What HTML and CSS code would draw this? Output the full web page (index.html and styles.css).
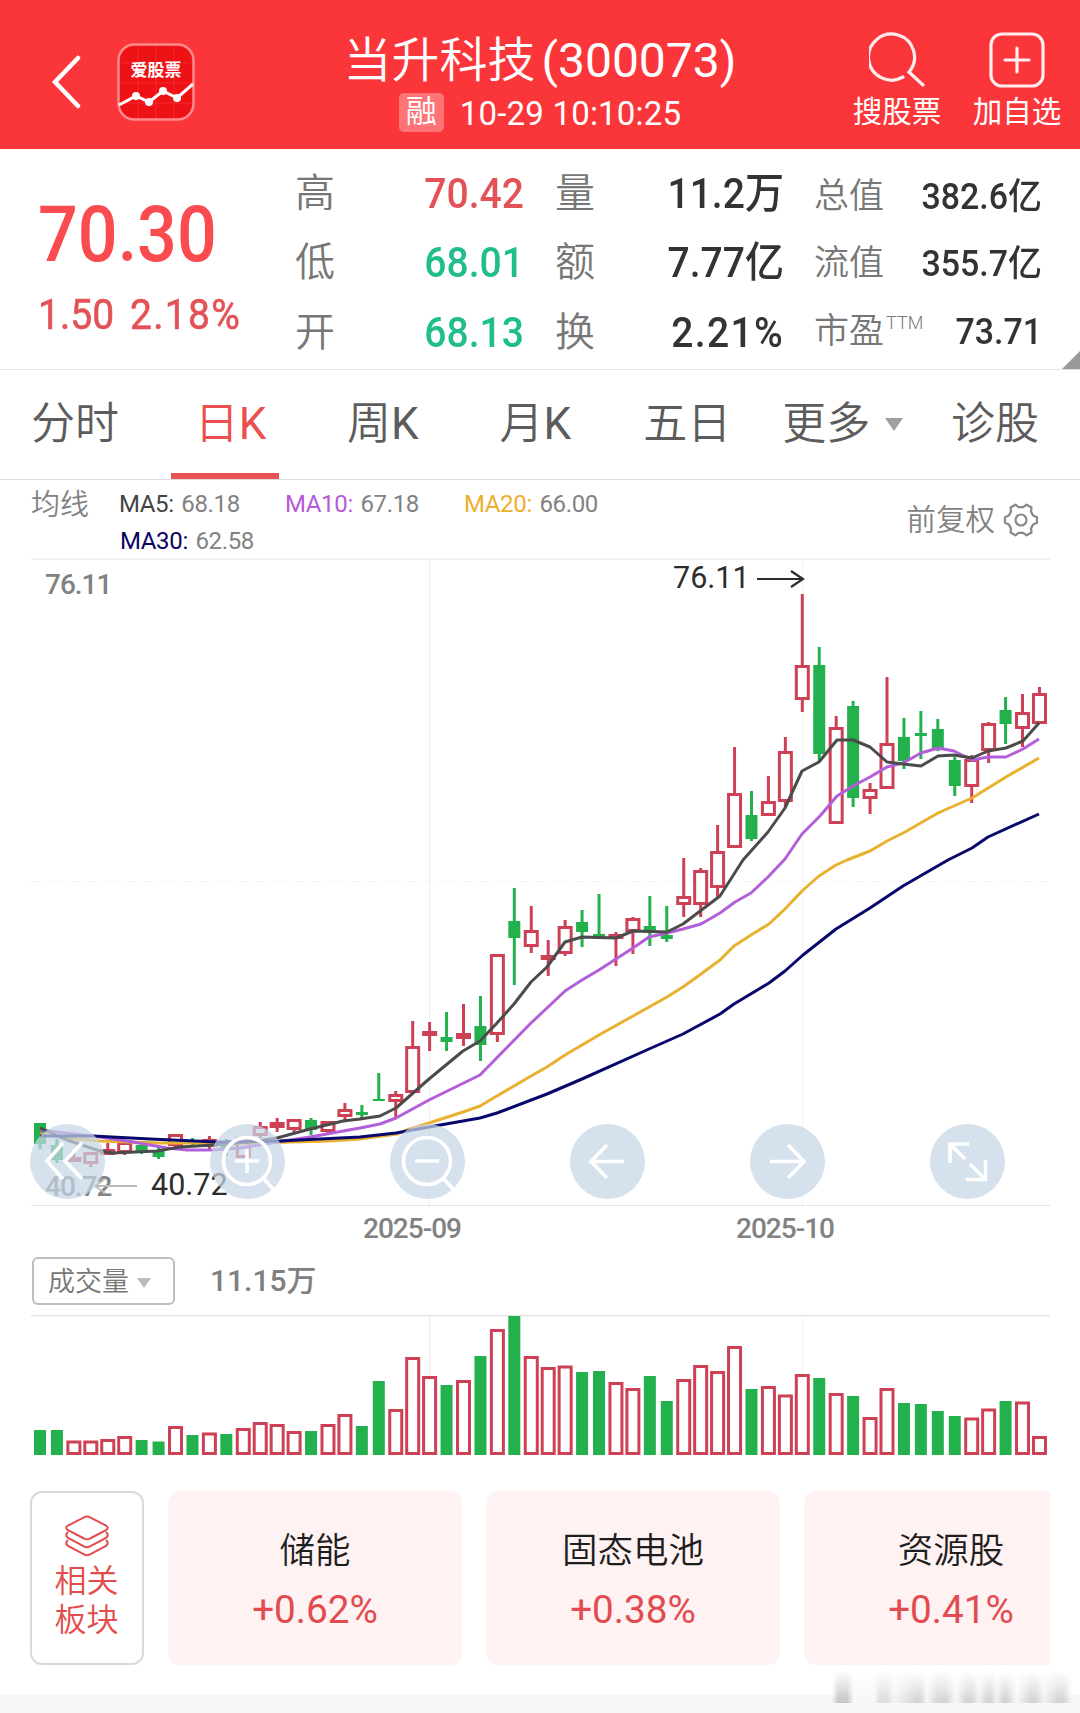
FILE: index.html
```html
<!DOCTYPE html>
<html lang="zh-CN">
<head>
    <meta charset="UTF-8">
    <meta name="viewport" content="width=device-width, initial-scale=1.0">
    <title>当升科技(300073)</title>
    <link rel="stylesheet" href="styles.css">
</head>
<body>

    <header class="header">
        <svg class="back" viewBox="0 0 30 54"><path d="M27 3 L4 27 L27 51"/></svg>
        <svg class="logo" viewBox="0 0 78 78">
            <rect x="1.5" y="1.5" width="75" height="75" rx="16" fill="#ee1217" stroke="#ff8a8c" stroke-width="2.5"/>
            <path d="M21 3V75M39 3V75M57 3V75M3 20H75M3 40H75M3 60H75" stroke="#f4282b" stroke-width="1" fill="none"/>
            <text x="39" y="33" text-anchor="middle">爱股票</text>
            <path d="M2 62 L19 53 L32 59 L46 48 L60 55 L76 41" stroke="#fff" stroke-width="3" fill="none"/>
            <g fill="#fff"><circle cx="19" cy="53" r="4"/><circle cx="32" cy="59" r="4"/><circle cx="46" cy="48" r="4"/><circle cx="60" cy="55" r="4"/></g>
        </svg>
        <div class="title">
            <h1>当升科技<span>(300073)</span></h1>
            <p><span class="badge">融</span><span class="time">10-29 10:10:25</span></p>
        </div>
        <div class="action">
            <svg viewBox="0 0 56 56"><path d="M34 45 A23 23 0 1 1 40 40 L54 53"/></svg>
            <span>搜股票</span>
        </div>
        <div class="action">
            <svg viewBox="0 0 56 56"><rect x="2" y="2" width="52" height="52" rx="11"/><path d="M28 16V40M16 28H40"/></svg>
            <span>加自选</span>
        </div>
    </header>

    <section class="quote">
        <div class="price">
            <div class="now">70.30</div>
            <div class="change"><span>1.50</span><span class="percent">2.18%</span></div>
        </div>
        <dl class="stats col1">
            <dt>高</dt><dd class="up">70.42</dd>
            <dt>低</dt><dd class="down">68.01</dd>
            <dt>开</dt><dd class="down">68.13</dd>
        </dl>
        <dl class="stats col2">
            <dt>量</dt><dd>11.2万</dd>
            <dt>额</dt><dd>7.77亿</dd>
            <dt>换</dt><dd class="percent">2.21%</dd>
        </dl>
        <dl class="stats col3">
            <dt>总值</dt><dd>382.6亿</dd>
            <dt>流值</dt><dd>355.7亿</dd>
            <dt>市盈<sup>TTM</sup></dt><dd>73.71</dd>
        </dl>
        <i class="corner"></i>
    </section>

    <nav class="tabs">
        <a class="t1">分时</a>
        <a class="t2 active">日<span>K</span></a>
        <a class="t3">周<span>K</span></a>
        <a class="t4">月<span>K</span></a>
        <a class="t5">五日</a>
        <a class="t6">更多<i class="caret"></i></a>
        <a class="t7">诊股</a>
    </nav>

    <section class="legend">
        <span class="legend-name">均线</span>
        <div class="averages">
            <span class="w1"><b class="ma5">MA5:</b> 68.18</span>
            <span class="w2"><b class="ma10">MA10:</b> 67.18</span>
            <span class="w3"><b class="ma20">MA20:</b> 66.00</span>
            <span class="w4"><b class="ma30">MA30:</b> 62.58</span>
        </div>
        <div class="adjust">
            <span>前复权</span>
            <svg viewBox="0 0 34 34">
                <path d="M33 14.2L33 19.8L29.2 21.4L27 25.4L27.5 29.5L22.6 32.3L19.3 29.8L14.7 29.8L11.4 32.3L6.5 29.5L7 25.4L4.8 21.4L1 19.8L1 14.2L4.8 12.6L7 8.6L6.5 4.5L11.4 1.7L14.7 4.2L19.3 4.2L22.6 1.7L27.5 4.5L27 8.6L29.2 12.6Z"/>
                <circle cx="17" cy="17" r="5.5"/>
            </svg>
        </div>
    </section>

    <section class="chart">
        <svg id="kline" width="1080" height="690" viewBox="0 558 1080 690"></svg>
        <div class="controls">
            <svg viewBox="0 0 75 75"><path d="M33 19L17 37L33 55M52 19L35 37L52 55"/></svg>
            <svg viewBox="0 0 75 75"><circle cx="37" cy="37" r="23.5"/><path d="M25 37H49M37 25V49M53 54L63 65"/></svg>
            <svg viewBox="0 0 75 75"><circle cx="37" cy="37" r="23.5"/><path d="M25 37H49M53 54L63 65"/></svg>
            <svg viewBox="0 0 75 75"><path d="M54 37.5H21M37 21L21 37.5L37 54"/></svg>
            <svg viewBox="0 0 75 75"><path d="M20 37.5H54M38 21L54 37.5L38 54"/></svg>
            <svg viewBox="0 0 75 75"><path d="M39 20H20V39M20 20L35 35M40 40L55 55M36 55.5H55.5V36"/></svg>
        </div>
    </section>

    <section class="volume">
        <div class="volume-bar">
            <button class="select">成交量<i class="caret"></i></button>
            <span class="volume-now">11.15万</span>
        </div>
        <svg id="volume" width="1080" height="142" viewBox="0 1315 1080 142"></svg>
    </section>

    <section class="related">
        <div class="related-title">
            <svg viewBox="0 0 44 42">
                <path d="M19 2.3 Q22 .7 25 2.3 L41 10.5 Q44.5 12.8 41 15.2 L25 23.5 Q22 25.2 19 23.5 L3 15.2 Q-.5 12.8 3 10.5 Z"/>
                <path d="M3 17 Q-.5 20 3 23 L19 31.3 Q22 33 25 31.3 L41 23 Q44.5 20 41 17"/>
                <path d="M3 25 Q-.5 28 3 31 L19 39.3 Q22 41 25 39.3 L41 31 Q44.5 28 41 25"/>
            </svg>
            <span>相关<br>板块</span>
        </div>
        <div class="card"><h2>储能</h2><p>+0.62%</p></div>
        <div class="card"><h2>固态电池</h2><p>+0.38%</p></div>
        <div class="card"><h2>资源股</h2><p>+0.41%</p></div>
    </section>

    <footer class="footer"><div class="shade"></div></footer>

    <script src="script.js"></script>
</body>
</html>
```

FILE: styles.css
```css
* {
    margin: 0;
    padding: 0;
    box-sizing: border-box;
}
body {
    width: 1080px;
    height: 1713px;
    overflow: hidden;
    background-color: #fff;
    font-family: Roboto, "Noto Sans CJK SC", sans-serif;
    color: #333;
}
svg {
    display: block;
    flex-shrink: 0;
}
i {
    display: inline-block;
}

/* 顶部 */
.header {
    height: 149px;
    background-color: #fb363b;
    color: #fff;
    display: flex;
    padding-left: 51px;
}
.back {
    width: 30px;
    height: 54px;
    margin-top: 55px;
    fill: none;
    stroke: #fff;
    stroke-width: 4.5;
    stroke-linecap: round;
}
.logo {
    width: 78px;
    height: 78px;
    margin: 43px 0 0 36px;
}
.logo text {
    font-size: 17px;
    font-weight: 700;
    fill: #fff;
}
.title {
    width: 500px;
    margin-left: 95px;
    text-align: center;
    padding-top: 32px;
}
.title h1 {
    font-size: 48px;
    font-weight: 350;
    line-height: 58px;
    white-space: nowrap;
}
.title h1 span {
    font-weight: 400;
    margin-left: 6px;
}
.title p {
    display: flex;
    align-items: center;
    justify-content: center;
    height: 39px;
    margin-top: 3px;
}
.badge {
    width: 45px;
    height: 39px;
    line-height: 38px;
    font-size: 31px;
    border-radius: 5px;
    background-color: #fd7376;
    margin-right: 16px;
}
.time {
    font-size: 33px;
    line-height: 41px;
    padding-top: 2px;
    letter-spacing: 0.2px;
}
.action {
    width: 120px;
    flex-shrink: 0;
    padding-top: 32px;
    display: flex;
    flex-direction: column;
    align-items: center;
    font-size: 29.5px;
    line-height: 40px;
}
.title + .action {
    margin-left: 47px;
}
.action svg {
    width: 56px;
    height: 56px;
    margin-bottom: 4px;
    fill: none;
    stroke: #ffecec;
    stroke-width: 3.2;
    stroke-linecap: round;
}

/* 行情 */
.quote {
    position: relative;
    height: 221px;
    border-bottom: 1px solid #e2e2e2;
    display: flex;
}
.price {
    width: 296px;
    padding-left: 38px;
    color: #fa4b50;
    font-weight: 500;
}
.now {
    font-size: 77px;
    line-height: 90px;
    margin-top: 41px;
    transform: scaleX(0.91);
    transform-origin: left;
}
.change {
    display: flex;
    gap: 17px;
    font-size: 42px;
    font-weight: 400;
    line-height: 50px;
    margin-top: 10px;
    color: #e35256;
    transform: scaleX(0.93);
    transform-origin: left;
    -webkit-text-stroke: 0.6px;
}
.percent {
    letter-spacing: 1.4px;
}
.stats {
    display: grid;
    grid-template-columns: auto 1fr;
    grid-auto-rows: 69.5px;
    align-items: center;
    padding-top: 10px;
    height: 218px;
    line-height: 50px;
}
.stats dt {
    font-size: 40px;
    font-weight: 350;
    color: #777;
    white-space: nowrap;
}
.stats dd {
    font-size: 42px;
    font-weight: 500;
    text-align: right;
    white-space: nowrap;
    transform: scaleX(0.93);
    transform-origin: right;
}
.stats .up {
    color: #e35256;
}
.stats .down {
    color: #20bd8d;
}
.col1 {
    width: 229px;
    margin-left: -1px;
}
.col2 {
    width: 229px;
    margin-left: 31px;
}
.col3 {
    grid-template-columns: 90px 138px;
    margin-left: 30px;
    grid-auto-rows: 67.5px;
    padding-top: 14px;
}
.col3 dt {
    font-size: 35px;
}
.col3 dd {
    font-size: 36.5px;
}
.col3 sup {
    font-size: 18px;
    line-height: 0;
    vertical-align: 14px;
    margin-left: 2px;
}
.corner {
    position: absolute;
    right: 0;
    bottom: 0;
    border-left: 18px solid transparent;
    border-bottom: 18px solid #999;
}

/* 周期 */
.tabs {
    height: 110px;
    border-bottom: 1px solid #dadcde;
    display: flex;
    padding: 0 41px 0 31px;
    font-size: 44px;
    line-height: 109px;
    font-weight: 350;
    color: #5c5c5c;
}
.tabs a {
    white-space: nowrap;
}
.tabs span {
    font-weight: 400;
}
.tabs .active {
    color: #ea5050;
    width: 108px;
    padding-left: 11px;
    text-align: center;
    border-bottom: 6px solid #e85252;
}
.t2 {
    margin-left: 52px;
}
.t3 {
    margin-left: 68px;
}
.t4 {
    margin-left: 81px;
}
.t5 {
    margin-left: 72px;
}
.t6 {
    margin-left: 51px;
}
.t7 {
    margin-left: auto;
}
.caret {
    border: 9px solid transparent;
    border-top: 13px solid #a0a0a0;
    border-bottom: 0;
    margin-left: 15px;
    vertical-align: 8px;
}

/* 均线 */
.legend {
    height: 78px;
    display: flex;
    padding: 0 42px 0 31px;
    color: #828282;
}
.legend-name {
    font-size: 29px;
    font-weight: 350;
    line-height: 50px;
    width: 88px;
}
.averages {
    width: 560px;
    display: flex;
    flex-wrap: wrap;
    font-size: 24px;
    line-height: 37px;
    padding-top: 6px;
}
.averages span {
    white-space: pre;
    letter-spacing: -0.35px;
}
.averages b {
    font-weight: 400;
    margin-right: 2px;
}
.w1 {
    width: 166px;
}
.w2 {
    width: 179px;
}
.w3 {
    width: 190px;
}
.w4 {
    padding-left: 1px;
}
.ma5 {
    color: #444;
}
.ma10 {
    color: #b55bd8;
}
.ma20 {
    color: #edb02e;
}
.ma30 {
    color: #0b0464;
}
.adjust {
    margin-left: auto;
    height: 79px;
    display: flex;
    align-items: center;
    gap: 9px;
    font-size: 29.5px;
    line-height: 40px;
    font-weight: 350;
}
.adjust svg {
    width: 34px;
    height: 34px;
    overflow: visible;
    fill: none;
    stroke: #888;
    stroke-width: 2.2;
    stroke-linejoin: round;
}

/* K线 */
.chart {
    position: relative;
}
.controls {
    position: absolute;
    left: 30px;
    top: 566px;
    display: flex;
    gap: 105px;
}
.controls svg {
    width: 75px;
    height: 75px;
    border-radius: 50%;
    background-color: rgba(197, 213, 229, 0.72);
    fill: none;
    stroke: #fff;
    stroke-width: 3.6;
}
.axis {
    font-size: 28px;
    font-weight: 500;
    letter-spacing: -1px;
    fill: #828282;
}
.callout {
    font-size: 30.5px;
    fill: #2d2d2d;
}

/* 成交量 */
.volume-bar {
    height: 67px;
    padding: 9px 0 0 32px;
    display: flex;
    align-items: flex-start;
}
.select {
    width: 143px;
    height: 48px;
    border: 2px solid #bfbfbf;
    border-radius: 6px;
    background: none;
    padding: 2px 0 0 14px;
    text-align: left;
    font: 350 27px/42px Roboto, "Noto Sans CJK SC", sans-serif;
    color: #777;
    white-space: nowrap;
}
.select .caret {
    border-width: 10px 7.5px 0;
    border-top-color: #bbb;
    margin-left: 8px;
    vertical-align: 3px;
}
.volume-now {
    font-size: 30px;
    font-weight: 500;
    line-height: 47px;
    margin-left: 35px;
    color: #808080;
}

/* 相关板块 */
.related {
    display: flex;
    gap: 24px;
    height: 174px;
    margin: 34px 30px 30px;
    overflow: hidden;
}
.related-title {
    width: 114px;
    flex-shrink: 0;
    border: 2px solid #dadada;
    border-radius: 12px;
    padding: 22px 1px 0 0;
    text-align: center;
    font-size: 32px;
    font-weight: 350;
    line-height: 39px;
    color: #e24c4c;
}
.related-title svg {
    width: 44px;
    height: 42px;
    margin: 0 auto 5px;
    fill: none;
    stroke: #e04c4c;
    stroke-width: 2;
}
.card {
    width: 294px;
    flex-shrink: 0;
    border-radius: 12px;
    background-color: #fef2f2;
    text-align: center;
    padding-top: 35px;
}
.card h2 {
    font-size: 35.5px;
    font-weight: 350;
    line-height: 50px;
    color: #1e1e1e;
}
.card p {
    font-size: 38.7px;
    line-height: 50px;
    margin-top: 9px;
    color: #e24c50;
}
.footer {
    position: relative;
    height: 18px;
    background-color: #f7f7f7;
}
.shade {
    position: absolute;
    left: 832px;
    top: -24px;
    width: 240px;
    height: 32px;
    background: linear-gradient(90deg, transparent 0, #c4c4c4 6px 15px, #f8f8f8 22px 42px, #dcdcdc 48px 55px, #f5f5f5 62px, #d2d2d2 84px 88px, #f5f5f5 95px, #d2d2d2 106px 114px, #f8f8f8 124px, #d2d2d2 134px 140px, #f2f2f2 147px, #d2d2d2 155px 159px, #f2f2f2 165px, #d2d2d2 171px 175px, #f8f8f8 185px, #d2d2d2 198px 203px, #f2f2f2 212px, #d2d2d2 226px 232px, transparent);
    -webkit-mask-image: linear-gradient(transparent, #000);
    mask-image: linear-gradient(transparent, #000);
}
```

FILE: script.js
```js
var RED = '#cd4055';
var GREEN = '#23b14d';
var STEP = 16.94;

// 颜色, 最高, 实体上沿, 实体下沿, 最低, 成交量
var days = [
    ['g', 1123, 1123, 1144, 1149, 25], ['g', 1139, 1145, 1160, 1163, 25], ['r', 1153, 1157, 1162, 1162, 14.5],
    ['r', 1152, 1152, 1164, 1167, 14.5], ['r', 1143, 1149, 1155, 1155, 16], ['r', 1142, 1142, 1153, 1155, 19],
    ['g', 1145, 1145, 1152, 1154, 15], ['g', 1147, 1150, 1157, 1159, 13.5], ['r', 1134, 1134, 1146, 1147, 29],
    ['g', 1138, 1140, 1144, 1147, 20], ['r', 1136, 1139, 1147, 1149, 22.5], ['g', 1139, 1143, 1150, 1156, 21],
    ['r', 1137, 1137, 1158, 1158, 27], ['r', 1122, 1126, 1136, 1138, 33], ['r', 1118, 1122, 1128, 1132, 31],
    ['r', 1119, 1119, 1130, 1132, 24], ['g', 1118, 1120, 1130, 1135, 24], ['r', 1121, 1121, 1132, 1133, 31],
    ['r', 1103, 1109, 1117, 1120, 41], ['g', 1105, 1112, 1115, 1119, 29], ['g', 1073, 1099, 1101, 1101, 74],
    ['r', 1091, 1094, 1102, 1117, 46], ['r', 1021, 1046, 1093, 1093, 98], ['r', 1022, 1031, 1036, 1051, 79],
    ['g', 1012, 1037, 1042, 1051, 70], ['r', 1004, 1033, 1039, 1046, 75], ['g', 996, 1026, 1045, 1061, 99],
    ['r', 954, 954, 1035, 1042, 126], ['g', 888, 921, 938, 985, 139], ['r', 906, 930, 947, 953, 99],
    ['r', 940, 955, 960, 976, 88], ['r', 920, 926, 954, 956, 89.5], ['g', 910, 922, 932, 947, 83],
    ['g', 894, 934, 939, 939, 84], ['r', 932, 934, 939, 966, 73], ['r', 917, 918, 932, 954, 67],
    ['g', 896, 926, 931, 946, 79], ['g', 906, 935, 939, 942, 54], ['r', 858, 896, 905, 917, 76],
    ['r', 868, 870, 905, 917, 90], ['r', 825, 851, 888, 897, 84], ['r', 747, 793, 848, 848, 109],
    ['g', 791, 815, 839, 841, 66], ['r', 776, 801, 816, 816, 69], ['r', 737, 751, 802, 807, 60.5],
    ['r', 594, 665, 700, 712, 81], ['g', 647, 665, 754, 762, 77], ['r', 716, 727, 824, 824, 62],
    ['g', 701, 706, 798, 807, 59], ['r', 783, 789, 799, 814, 38], ['r', 677, 743, 789, 789, 67],
    ['g', 718, 737, 761, 769, 52], ['g', 711, 733, 736, 759, 51], ['g', 719, 729, 749, 751, 44],
    ['g', 757, 760, 786, 796, 39], ['r', 755, 759, 787, 803, 37.5], ['r', 722, 723, 751, 763, 46.5],
    ['g', 697, 710, 724, 744, 54], ['r', 694, 712, 729, 747, 53.5], ['r', 687, 693, 724, 724, 19]
];

var averages = {
    '#e8b12f': '40,1134 67,1138 100,1141 160,1143 250,1143 330,1141 360,1139 397,1134 407,1130 429,1123 463,1112 480,1106 514,1086 531,1076 547,1067 565,1055 599,1035 633,1016 667,997 683,987 701,974 720,960 734,946 751,935 769,924 785,909 802,891 819,876 836,865 847,860 870,851 887,841 905,832 938,813 972,798 1006,777 1039,758',
    '#b35fd9': '40,1130 100,1137 133,1142 167,1148 187,1150 213,1150 240,1148 277,1142 310,1137 360,1128 380,1124 396,1118 429,1100 480,1075 531,1023 547,1008 565,991 582,980 599,970 633,948 649,937 667,933 683,929 701,924 720,913 735,902 751,893 768,877 785,859 802,834 820,816 837,796 853,786 870,777 887,767 903,763 921,753 938,748 954,751 972,760 988,757 1006,757 1023,749 1039,739',
    '#4b4b4b': '40,1128 67,1140 100,1151 113,1153 157,1151 180,1147 213,1145 250,1142 277,1138 310,1129 343,1121 360,1119 380,1116 396,1108 429,1079 463,1051 480,1041 497,1023 514,1004 531,982 547,967 565,942 582,937 616,938 633,931 667,932 683,924 720,896 743,860 768,832 785,808 802,771 819,762 837,740 853,740 870,747 887,762 903,764 921,766 938,756 954,755 972,758 988,751 1006,748 1023,741 1039,723',
    '#08086c': '40,1136 93,1136 150,1139 217,1142 280,1141 360,1137 396,1133 429,1127 463,1121 480,1118 497,1113 547,1094 582,1079 649,1049 683,1034 720,1014 734,1004 769,983 785,971 803,955 836,929 870,908 903,886 922,875 948,860 972,848 988,837 1039,814'
};

function line(x1, y1, x2, y2, color, width) {
    return '<path d="M' + x1 + ' ' + y1 + 'L' + x2 + ' ' + y2 + '" stroke="' + color + '" stroke-width="' + width + '" fill="none"/>';
}

// 阳线空心，阴线实心
function box(type, x, top, bottom) {
    if (type === 'g') {
        return '<rect x="' + (x - 6) + '" y="' + top + '" width="12" height="' + (bottom - top) + '" fill="' + GREEN + '"/>';
    }
    return '<rect x="' + (x - 6) + '" y="' + (top + 1.5) + '" width="12" height="' + Math.max(bottom - top - 3, 1) + '" fill="#fff" stroke="' + RED + '" stroke-width="3"/>';
}

var k = '';
k += line(31, 559, 1050, 559, '#f0f2f4', 2);
k += line(31, 1205.5, 1050, 1205.5, '#e2e3e5', 1);
k += line(429.5, 560, 429.5, 1205, '#f1f1f3', 1.5) + line(802.5, 560, 802.5, 1205, '#f5f5f7', 1.5);
k += '<path d="M31 881.5H1050" stroke="#f3f3f5" stroke-dasharray="8 6"/>';

var v = line(31, 1315.5, 1050, 1315.5, '#e2e4e6', 1.5);
v += line(429.5, 1316, 429.5, 1455, '#efeff1', 1.5) + line(802.5, 1316, 802.5, 1455, '#f5f5f7', 1.5);

days.forEach(function (d, i) {
    var x = 40 + i * STEP;
    k += line(x, d[1], x, d[4], d[0] === 'g' ? GREEN : RED, 3);
    k += box(d[0], x, d[2], d[3]);
    v += box(d[0], x, 1455 - d[5], 1455);
});

Object.keys(averages).forEach(function (color) {
    k += '<polyline points="' + averages[color] + '" fill="none" stroke="' + color + '" stroke-width="3" stroke-linejoin="round"/>';
});

k += '<text class="axis" x="45" y="594">76.11</text>';
k += '<text class="axis" x="45" y="1196">40.72</text>';
k += '<text class="axis" x="363" y="1238">2025-09</text>';
k += '<text class="axis" x="736" y="1238">2025-10</text>';
k += '<text class="callout" x="673" y="588">76.11</text>';
k += '<text class="callout" x="151" y="1195">40.72</text>';
k += '<path d="M757 579H802M791 571L803 579L791 587" fill="none" stroke="#2d2d2d" stroke-width="2.2"/>';
k += '<path d="M137 1186H95M105 1179L95 1186L105 1193" fill="none" stroke="#bbb" stroke-width="2"/>';

document.getElementById('kline').innerHTML = k;
document.getElementById('volume').innerHTML = v;
```
